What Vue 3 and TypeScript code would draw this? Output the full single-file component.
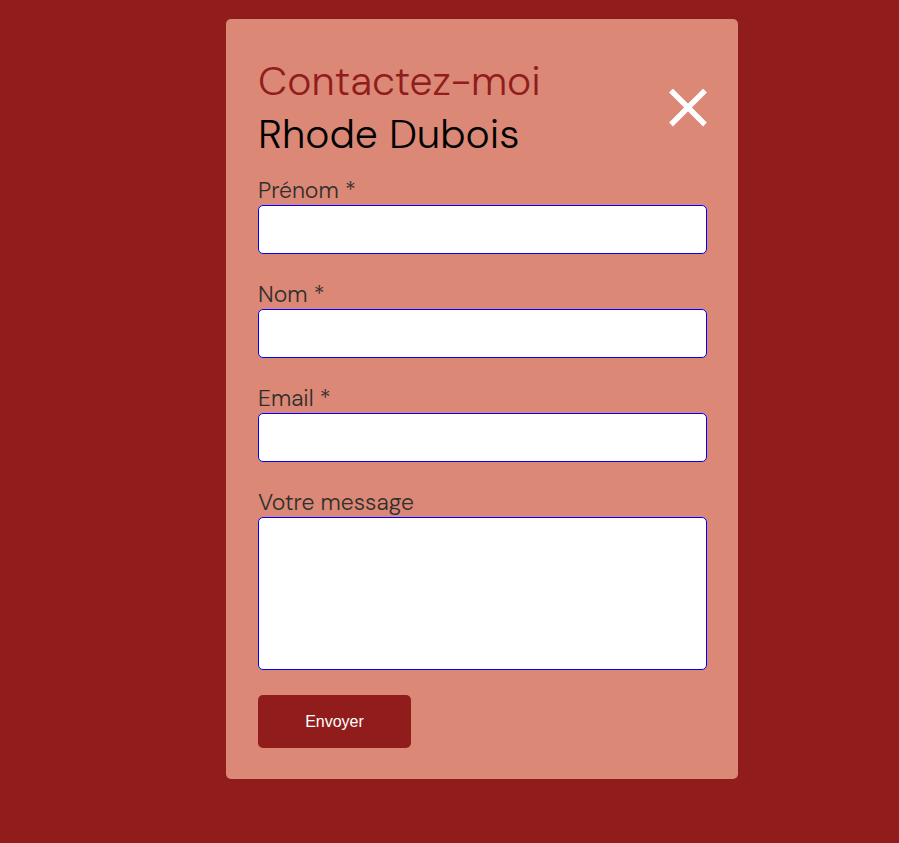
<script setup lang="ts">
import { reactive, ref } from 'vue'

const open = ref(true)
const form = reactive({ firstName: '', lastName: '', email: '', message: '' })
</script>

<template>
  <main class="page">
    <section v-if="open" class="modal" role="dialog" aria-labelledby="contact-title">
      <header class="header">
        <h1 id="contact-title" class="title">
          <span class="lead">Contactez-moi</span>
          <span>Rhode Dubois</span>
        </h1>
        <button class="close" type="button" aria-label="Fermer" @click="open = false">
          <svg width="38" height="38" viewBox="0 0 38 38" aria-hidden="true">
            <path d="M2 1.5 36 35.5M36 1.5 2 35.5" fill="none" stroke="#fff" stroke-width="5.4" />
          </svg>
        </button>
      </header>
      <form @submit.prevent>
        <div class="field">
          <label for="first-name">Prénom *</label>
          <input id="first-name" v-model="form.firstName" type="text" required />
        </div>
        <div class="field">
          <label for="last-name">Nom *</label>
          <input id="last-name" v-model="form.lastName" type="text" required />
        </div>
        <div class="field">
          <label for="email">Email *</label>
          <input id="email" v-model="form.email" type="email" required />
        </div>
        <div class="field">
          <label for="message">Votre message</label>
          <textarea id="message" v-model="form.message"></textarea>
        </div>
        <button class="submit" type="submit">Envoyer</button>
      </form>
    </section>
  </main>
</template>

<style>
body {
  background: #901c1c;
}
</style>

<style scoped>
.page {
  display: flex;
  justify-content: center;
  padding: 19px 0 64px 65px;
  font-family: "DM Sans", "Open Sans", sans-serif;
}

.modal {
  box-sizing: border-box;
  width: 100%;
  max-width: 512px;
  padding: 36px 31px 31px 32px;
  border-radius: 5px;
  background: #db8876;
}

.header {
  display: flex;
  justify-content: space-between;
  align-items: center;
}

.title {
  display: flex;
  flex-direction: column;
  margin: 0;
  font-size: 41px;
  font-weight: 300;
  line-height: 53px;
}

.lead {
  color: #901c1c;
}

.close {
  display: flex;
  padding: 0;
  border: 0;
  background: none;
  cursor: pointer;
}

form {
  padding-top: 14px;
}

.field {
  display: flex;
  flex-direction: column;
  margin-bottom: 25px;
}

label {
  color: #312e2e;
  font-size: 23px;
  font-weight: 300;
  line-height: 30px;
}

input,
textarea {
  box-sizing: border-box;
  width: 100%;
  height: 49px;
  padding: 8px;
  border: 1px solid blue;
  border-radius: 5px;
  background: #fff;
  font-size: 22px;
}

textarea {
  height: 153px;
  resize: none;
}

.submit {
  width: 153px;
  height: 53px;
  border: 0;
  border-radius: 5px;
  background: #901c1c;
  color: #fff;
  font-family: "Liberation Sans", Arial, sans-serif;
  font-size: 16px;
  cursor: pointer;
}
</style>
